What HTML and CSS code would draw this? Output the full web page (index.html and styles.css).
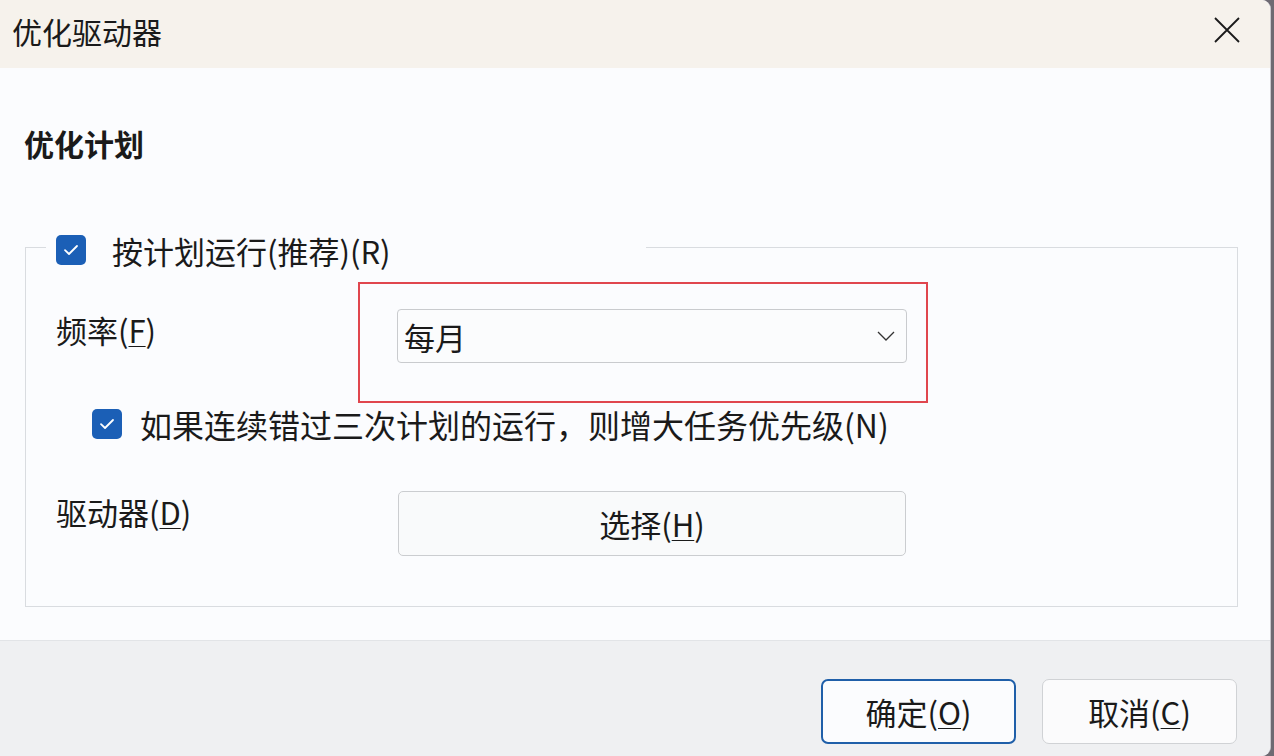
FILE: index.html
```html
<!DOCTYPE html>
<html lang="zh-CN">
<head>
<meta charset="utf-8">
<title>优化驱动器</title>
<link rel="stylesheet" href="styles.css">
</head>
<body>
<div class="dialog">
  <div class="titlebar">
    <span class="title">优化驱动器</span>
    <span class="close">
      <svg width="26" height="26" viewBox="0 0 26 26"><path d="M1 1 L25 25 M25 1 L1 25" stroke="#1a1a1a" stroke-width="1.8" fill="none"/></svg>
    </span>
  </div>
  <div class="content">
    <div class="heading">优化计划</div>
    <fieldset class="group">
      <legend class="legend">
        <span class="check check-legend"><svg width="16" height="12" viewBox="0 0 16 12"><path d="M2 6.2 L6 10 L14 2" stroke="#fff" stroke-width="1.8" fill="none" stroke-linecap="round" stroke-linejoin="round"/></svg></span>
        <span class="legend-text">按计划运行(推荐)(R)</span>
      </legend>
      <div class="row">
        <span class="label">频率(<u>F</u>)</span>
        <div class="combo-wrap">
          <div class="combo">
            <span>每月</span>
            <svg width="18" height="10" viewBox="0 0 18 10"><path d="M1 1 L9 9 L17 1" stroke="#333" stroke-width="1.3" fill="none"/></svg>
          </div>
          <div class="highlight"></div>
        </div>
      </div>
      <div class="row-check">
        <span class="check"><svg width="16" height="12" viewBox="0 0 16 12"><path d="M2 6.2 L6 10 L14 2" stroke="#fff" stroke-width="1.8" fill="none" stroke-linecap="round" stroke-linejoin="round"/></svg></span>
        <span class="check-text">如果连续错过三次计划的运行，则增大任务优先级(N)</span>
      </div>
      <div class="row row-drive">
        <span class="label">驱动器(<u>D</u>)</span>
        <button class="btn-select">选择(<u>H</u>)</button>
      </div>
    </fieldset>
  </div>
  <div class="footer">
    <button class="btn btn-primary">确定(<u>O</u>)</button>
    <button class="btn">取消(<u>C</u>)</button>
  </div>
</div>
</body>
</html>
```

FILE: styles.css
```css
* { box-sizing: border-box; }

html, body {
  margin: 0;
  padding: 0;
  background: #6e6a72;
}

body {
  font-family: "Noto Sans CJK SC", "Noto Sans", sans-serif;
  color: #1a1a1a;
  width: 1274px;
  height: 756px;
  overflow: hidden;
}

.dialog {
  width: 1271px;
  height: 756px;
  display: flex;
  flex-direction: column;
  background: #fbfcfe;
  border-radius: 0 9px 9px 0;
  overflow: hidden;
  border-right: 1px solid #c9c6cc;
}

.titlebar {
  height: 68px;
  flex: none;
  background: #f6f2ec;
  display: flex;
  align-items: center;
  justify-content: space-between;
  padding: 0 30px 0 12px;
}

.title {
  font-size: 30px;
  line-height: 40px;
  margin-top: -7px;
}

.close {
  display: flex;
  margin-top: -8px;
}

.content {
  flex: 1;
  padding: 53px 32px 0 24px;
}

.heading {
  font-size: 30px;
  font-weight: 700;
  line-height: 44px;
}

.group {
  margin: 64px 0 0 1px;
  border: 1px solid #d9dce0;
  padding: 44px 30px 50px 30px;
  min-width: 0;
}

.legend {
  width: 600px;
  padding: 0 0 0 10px;
  margin-left: -10px;
  display: flex;
  align-items: flex-start;
  height: 36px;
}

.check {
  width: 30px;
  height: 30px;
  border-radius: 5px;
  background: #1b5fb6;
  display: inline-flex;
  align-items: center;
  justify-content: center;
  flex: none;
}

.check-legend {
  margin-top: 6px;
}

.legend-text {
  font-size: 31px;
  line-height: 36px;
  margin-left: 26px;
  margin-top: 4px;
}

.row {
  display: flex;
  align-items: flex-start;
}

.label {
  width: 341px;
  flex: none;
  font-size: 31px;
  line-height: 40px;
  margin-top: 1px;
}

.combo-wrap {
  position: relative;
}

.combo {
  width: 510px;
  height: 54px;
  border: 1px solid #c9cbce;
  border-radius: 4px;
  background: #fbfcfd;
  display: flex;
  align-items: center;
  justify-content: space-between;
  padding: 0 11px 0 6px;
  font-size: 31px;
}

.highlight {
  position: absolute;
  left: -39px;
  top: -27px;
  width: 570px;
  height: 121px;
  border: 2px solid #e0464e;
  pointer-events: none;
}

.row-check {
  display: flex;
  align-items: center;
  margin: 43px 0 0 36px;
  height: 36px;
}

.check-text {
  font-size: 32px;
  line-height: 36px;
  margin-left: 18px;
}

.row-drive {
  margin-top: 49px;
}

.btn-select {
  width: 508px;
  height: 65px;
  margin-left: 1px;
  border: 1px solid #cbcdd0;
  border-radius: 5px;
  background: #f9fafb;
  font-family: inherit;
  font-size: 31px;
  color: #1a1a1a;
  padding: 0;
}

.footer {
  height: 116px;
  flex: none;
  background: #eff0f2;
  border-top: 1px solid #e2e4e7;
  display: flex;
  justify-content: flex-end;
  align-items: flex-start;
  gap: 26px;
  padding: 38px 33px 0 0;
}

.btn {
  width: 195px;
  height: 65px;
  border: 1px solid #d0d2d5;
  border-radius: 7px;
  background: #fbfbfc;
  font-family: inherit;
  font-size: 31px;
  color: #1a1a1a;
  padding: 0;
}

.btn-primary {
  border: 2px solid #1f5fa9;
  background: #fbfcfe;
}

u {
  text-underline-offset: 3px;
  text-decoration-thickness: 1px;
}
```
